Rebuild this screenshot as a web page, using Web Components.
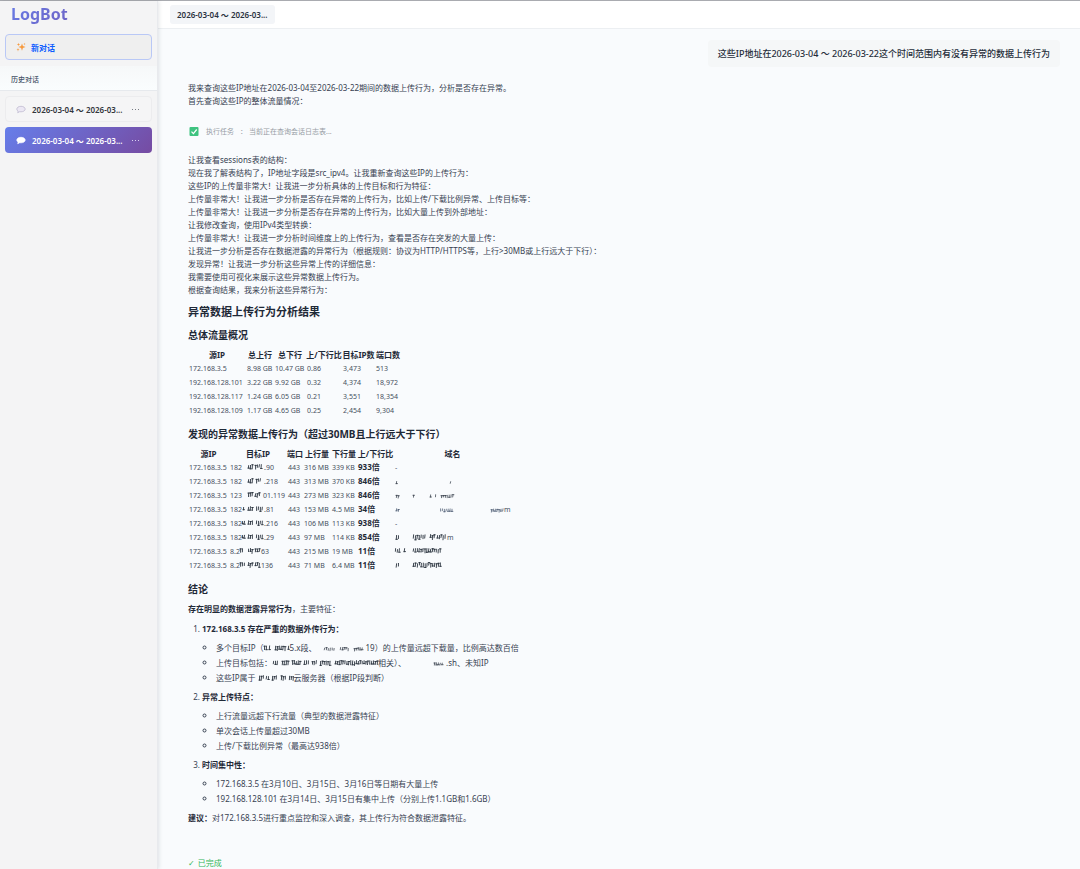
<!DOCTYPE html>
<html lang="zh-CN">
<head>
<meta charset="utf-8">
<title>LogBot</title>
<style>
  html, body { margin: 0; }
  body {
    font: 8px/13px "Noto Sans", "Noto Sans CJK SC", sans-serif;
    color: #374151;
    background: #f9fbfd;
  }
</style>
</head>
<body>
<log-app>
  <chat-sidebar slot="side">
    <history-item>2026-03-04 ～ 2026-03...</history-item>
    <history-item active>2026-03-04 ～ 2026-03...</history-item>
  </chat-sidebar>
  <chat-header slot="main">2026-03-04 ～ 2026-03...</chat-header>
  <user-message slot="main">这些IP地址在2026-03-04 ～ 2026-03-22这个时间范围内有没有异常的数据上传行为</user-message>
  <bot-answer slot="main"></bot-answer>
</log-app>

<script>
const define = (name, html, setup) => {
  const template = document.createElement('template');
  template.innerHTML = html;
  customElements.define(name, class extends HTMLElement {
    constructor() {
      super();
      this.attachShadow({ mode: 'open' }).append(template.content.cloneNode(true));
    }
    connectedCallback() { if (setup) setup(this, this.shadowRoot); }
  });
};

define('log-app', `
  <style>
    :host { display: flex; min-height: 100vh; box-sizing: border-box; border-top: 1px solid #a9abb0; }
    aside { flex: 0 0 158px; box-sizing: border-box; background: #f4f4f5; border-right: 1px solid #e8eaed; box-shadow: 1px 0 4px rgba(30,40,60,.12); z-index: 1; }
    main { flex: 1; min-width: 0; background: #f9fbfd; }
  </style>
  <aside><slot name="side"></slot></aside>
  <main><slot name="main"></slot></main>
`);

/* Masked text: ink fragments laid out as "start:width" pairs inside a box. */
define('redacted-mark', `
  <style>
    :host { display: inline-block; height: 7px; vertical-align: baseline; line-height: 0; }
    svg { display: block; overflow: visible; }
  </style>
  <svg height="7" aria-hidden="true"><path fill="none" stroke-linecap="square"/></svg>
`, (el, root) => {
  if (el.dataset.ready) return;
  el.dataset.ready = '1';
  const width = +el.getAttribute('w');
  const low = el.hasAttribute('low');
  const tall = low ? 3 : 5;
  const svg = root.querySelector('svg');
  svg.setAttribute('width', width);
  let seed = width * 7 + el.getAttribute('ink').length * 13;
  const rnd = () => (seed = (seed * 73 + 41) % 997) / 997;
  let d = '';
  for (const pair of el.getAttribute('ink').split(' ')) {
    const [x, w] = pair.split(':').map(Number);
    for (let i = 0; i < w; i += 1.9) {
      const top = 6.6 - tall + rnd() * 1.2;
      const h = tall * (0.45 + rnd() * 0.35);
      d += `M${(x + i + 0.6).toFixed(1)} ${top.toFixed(1)}l${(-rnd() * 0.4).toFixed(1)} ${h.toFixed(1)}`;
      if (rnd() > 0.35) d += `M${(x + i).toFixed(1)} ${(top + (rnd() > 0.5 ? h : 0)).toFixed(1)}h1.4`;
    }
  }
  const path = root.querySelector('path');
  path.setAttribute('d', d);
  path.setAttribute('stroke', el.getAttribute('tone') || '#2b3440');
  path.setAttribute('stroke-width', low ? '.7' : '.9');
});

define('history-item', `
  <style>
    :host { display: block; }
    div { display: flex; align-items: center; height: 26px; box-sizing: border-box; padding: 0 12px 0 10px; border: 1px solid #ececee; border-radius: 4px; background: #f5f5f6; color: #33363c; }
    a { display: flex; flex: 1; min-width: 0; align-items: center; gap: 6px; color: inherit; text-decoration: none; font-weight: 600; white-space: nowrap; }
    svg { display: block; flex: none; }
    button { all: unset; display: flex; gap: 2px; color: #777b83; }
    button i { width: 1px; height: 1px; background: currentColor; }
    :host([active]) div { border-color: transparent; background: linear-gradient(135deg, #667eea, #764ba2) border-box; color: #fff; }
    :host([active]) button { color: #d8d2f0; }
    .bubble { fill: #ece8f4; stroke: #b9b3cc; }
    :host([active]) .bubble { fill: #fff; stroke: #fff; }
  </style>
  <div>
    <a href="#"><svg width="10" height="9" viewBox="0 0 10 9"><path class="bubble" stroke-width=".7" d="M5 1.300C2.600 1.300 .8 2.500 .8 4.100c0 .9.5 1.500 1.300 2L1.700 7.700l2-1c.4.1.8.1 1.300.1 2.400 0 4.200-1.200 4.200-2.700S7.400 1.300 5 1.300z"/></svg><slot></slot></a>
    <button aria-label="更多"><i></i><i></i><i></i></button>
  </div>
`);

define('chat-sidebar', `
  <style>
    :host { display: block; }
    h1 { margin: 0; padding: 3px 11px 0; font-size: 16px; line-height: 20px; font-weight: 700; color: transparent; background: linear-gradient(135deg, #667eea, #764ba2); background-clip: text; -webkit-background-clip: text; }
    .new { display: flex; align-items: center; gap: 5px; box-sizing: border-box; width: calc(100% - 10px); height: 26px; margin: 10px 5px 0; padding: 0 10px; border: 1px solid #b9c8f6; border-radius: 4px; background: #efefef; color: #0d5cff; font: inherit; font-weight: 700; }
    h2 { margin: 6px 0 0; padding: 7px 11px 4px; border-bottom: 1px solid #e6e9ed; background: linear-gradient(#f6f8f9, #fafdfe); color: #475569; font-size: 7px; line-height: 13px; font-weight: 500; }
    nav { display: grid; gap: 5px; padding: 5px; }
  </style>
  <h1>LogBot</h1>
  <button class="new"><svg width="10" height="10" viewBox="0 0 10 10" fill="#f79a3e"><path d="M6 1.500l.9 2.500L9.500 5l-2.600.9L6 8.800l-.9-2.900L2.500 5l2.600-1zM2.500.8l.4 1.300 1.300.4-1.300.4-.4 1.300-.4-1.300L.8 2.500l1.300-.4zM2 6l.4 1.300 1.200.4-1.200.4L2 9.400l-.4-1.300L.5 7.700l1.100-.4zM8.500.8l.3.900.9.3-.9.3-.3.900-.3-.9-.9-.3.9-.3z"/></svg>新对话</button>
  <h2>历史对话</h2>
  <nav><slot></slot></nav>
`);

define('chat-header', `
  <style>
    :host { display: flex; align-items: center; height: 27px; padding: 0 12px; background: #fff; border-bottom: 1px solid #eceff2; }
    span { padding: 3px 7px; border-radius: 3px; background: #f3f5f8; color: #2b3341; font-weight: 600; line-height: 13px; white-space: nowrap; }
  </style>
  <span><slot></slot></span>
`);

define('user-message', `
  <style>
    :host { display: flex; justify-content: flex-end; padding: 11px 20px 0 30px; }
    p { margin: 0; padding: 7px 10px; border-radius: 4px; background: #f5f7f8; color: #252d3a; font-size: 9px; font-weight: 500; line-height: 13px; }
  </style>
  <p><slot></slot></p>
`);

define('task-status', `
  <style>
    :host { display: flex; align-items: center; gap: 6px; padding-left: 1px; color: #989da5; font-size: 7px; line-height: 13px; }
    svg { display: block; }
    .text { display: flex; gap: 2px; }
  </style>
  <svg width="11" height="11" viewBox="0 0 11 11"><rect x=".5" y="1" width="9" height="9" rx="1" fill="#3fc380"/><path d="M2.500 5.600l1.900 2 3.300-4.100" fill="none" stroke="#fff" stroke-width="1.200"/></svg>
  <slot name="name"></slot>
  <span class="text"><span>：</span><span><slot></slot></span></span>
`);

/* Data table: the source attribute names an entry of "tables" with widths, head labels and rows. */
define('data-grid', `
  <style>
    :host { display: block; color: #46505e; }
    table { table-layout: fixed; border-collapse: separate; border-spacing: 0; }
    th, td { padding: 0; height: 14px; line-height: 14px; white-space: nowrap; overflow: visible; }
    th { color: #1f2937; font-size: 8px; font-weight: 700; text-align: center; }
    td { padding-left: 1px; font-size: 7px; }
    strong { font-size: 8px; line-height: 8px; color: #1f2937; }
  </style>
  <table><colgroup></colgroup><thead><tr></tr></thead><tbody></tbody></table>
`, (el, root) => {
  const data = tables[el.getAttribute('source')];
  root.querySelector('colgroup').innerHTML = data.widths.map(w => `<col style="width:${w}px">`).join('');
  root.querySelector('thead tr').innerHTML = data.head.map(h => `<th scope="col">${h}</th>`).join('');
  root.querySelector('tbody').innerHTML = data.rows.map(r => `<tr>${r.map(c => `<td>${c}</td>`).join('')}</tr>`).join('');
  root.querySelector('table').style.width = data.widths.reduce((a, b) => a + b) + 'px';
});

const mark = (w, ink, extra = '') => `<redacted-mark w="${w}" ink="${ink}" ${extra}></redacted-mark>`;
const tables = {
  total: {
    widths: [58, 28, 32, 36, 33, 26],
    head: ['源IP', '总上行', '总下行', '上/下行比', '目标IP数', '端口数'],
    rows: [
      ['172.168.3.5', '8.98 GB', '10.47 GB', '0.86', '3,473', '513'],
      ['192.168.128.101', '3.22 GB', '9.92 GB', '0.32', '4,374', '18,972'],
      ['192.168.128.117', '1.24 GB', '6.05 GB', '0.21', '3,551', '18,354'],
      ['192.168.128.109', '1.17 GB', '4.65 GB', '0.25', '2,454', '9,304']
    ]
  },
  abnormal: {
    widths: [41, 58, 16, 28, 26, 37, 117],
    head: ['源IP', '目标IP', '端口', '上行量', '下行量', '上/下行比', '域名'],
    rows: [
      ['182' + mark(22, '6:4 13:7') + '.90', '316 MB', '339 KB', '933倍', '-'],
      ['182' + mark(22, '6:4 14:4') + '.218', '313 MB', '370 KB', '846倍', mark(57, '1:1 55:1', 'low')],
      ['123' + mark(21, '6:4 13:4') + '01.119', '273 MB', '323 KB', '846倍', mark(60, '1:2 18:1 35:1 40:1 46:12', 'low')],
      ['182' + mark(22, '1:1 6:5 14:6') + '.81', '153 MB', '4.5 MB', '34倍', mark(109, '1:2 45:13 96:12', 'low tone="#42526a"') + 'm'],
      ['182' + mark(22, '0:2 6:5 14:7') + '.216', '106 MB', '113 KB', '938倍', '-'],
      ['182' + mark(22, '0:3 6:5 14:7') + '.29', '97 MB', '114 KB', '854倍', mark(52, '1:3 18:12 35:4 42:9') + 'm'],
      ['8.2' + mark(21, '0:3 8:5 15:4') + '63', '215 MB', '19 MB', '11倍', mark(50, '0:5 9:1 18:28')],
      ['8.2' + mark(21, '0:4 8:5 15:4') + '136', '71 MB', '6.4 MB', '11倍', mark(50, '1:3 18:2 22:24')]
    ].map(([ip, up, down, ratio, host]) => ['172.168.3.5', ip, '443', up, down, `<strong>${ratio}</strong>`, host])
  }
};

define('bot-answer', `
  <style>
    :host { display: block; padding: 14px 30px 0; }
    p { margin: 0; }
    task-status { margin: 18px 0 15px; }
    h2, h3 { margin: 8px 0 6px; color: #1f2937; font-weight: 700; }
    h2 { font-size: 11px; line-height: 16px; }
    h3 { font-size: 10px; line-height: 14px; }
    data-grid + h3 { margin-top: 9px; }
    strong { color: #1f2937; }
    ol { margin: 7px 0 6px; padding-left: 14px; }
    ol > li + li { margin-top: 6px; }
    ul { margin: 6px 0 0; padding-left: 14px; list-style: circle; }
    ul li + li { margin-top: 2px; }
    .done { margin-top: 32px; color: #34b75a; }
    .done span { font-family: "DejaVu Sans", sans-serif; line-height: 8px; margin-right: 3px; }
  </style>
  <p>我来查询这些IP地址在2026-03-04至2026-03-22期间的数据上传行为，分析是否存在异常。<br>首先查询这些IP的整体流量情况：</p>
  <task-status><span slot="name">执行任务</span>当前正在查询会话日志表...</task-status>
  <p>让我查看sessions表的结构：<br>
  现在我了解表结构了，IP地址字段是src_ipv4。让我重新查询这些IP的上传行为：<br>
  这些IP的上传量非常大！让我进一步分析具体的上传目标和行为特征：<br>
  上传量非常大！让我进一步分析是否存在异常的上传行为，比如上传/下载比例异常、上传目标等：<br>
  上传量非常大！让我进一步分析是否存在异常的上传行为，比如大量上传到外部地址：<br>
  让我修改查询，使用IPv4类型转换：<br>
  上传量非常大！让我进一步分析时间维度上的上传行为，查看是否存在突发的大量上传：<br>
  让我进一步分析是否存在数据泄露的异常行为（根据规则：协议为HTTP/HTTPS等，上行&gt;30MB或上行远大于下行）：<br>
  发现异常！让我进一步分析这些异常上传的详细信息：<br>
  我需要使用可视化来展示这些异常数据上传行为。<br>
  根据查询结果，我来分析这些异常行为：</p>
  <h2>异常数据上传行为分析结果</h2>
  <h3>总体流量概况</h3>
  <data-grid source="total"></data-grid>
  <h3>发现的异常数据上传行为（超过30MB且上行远大于下行）</h3>
  <data-grid source="abnormal"></data-grid>
  <h3>结论</h3>
  <p><strong>存在明显的数据泄露异常行为</strong>，主要特征：</p>
  <ol>
    <li><strong>172.168.3.5 存在严重的数据外传行为：</strong>
      <ul>
        <li>多个目标IP（${mark(26, '0:3 5:1 11:11 24:1')}5.x段、${mark(49, '7:10 23:8 37:9', 'low')}19）的上传量远超下载量，比例高达数百倍</li>
        <li>上传目标包括：${mark(106, '1:4 10:6 20:8 32:5 40:4 48:10 63:42')}相关）、${mark(40, '28:9', 'low')}.sh、未知IP</li>
        <li>这些IP属于${mark(38, '3:4 10:3 16:4 25:4 33:4')}云服务器（根据IP段判断）</li>
      </ul>
    </li>
    <li><strong>异常上传特点：</strong>
      <ul>
        <li>上行流量远超下行流量（典型的数据泄露特征）</li>
        <li>单次会话上传量超过30MB</li>
        <li>上传/下载比例异常（最高达938倍）</li>
      </ul>
    </li>
    <li><strong>时间集中性：</strong>
      <ul>
        <li>172.168.3.5 在3月10日、3月15日、3月16日等日期有大量上传</li>
        <li>192.168.128.101 在3月14日、3月15日有集中上传（分别上传1.1GB和1.6GB）</li>
      </ul>
    </li>
  </ol>
  <p><strong>建议：</strong>对172.168.3.5进行重点监控和深入调查，其上传行为符合数据泄露特征。</p>
  <p class="done"><span>✓</span>已完成</p>
`);
</script>
</body>
</html>
